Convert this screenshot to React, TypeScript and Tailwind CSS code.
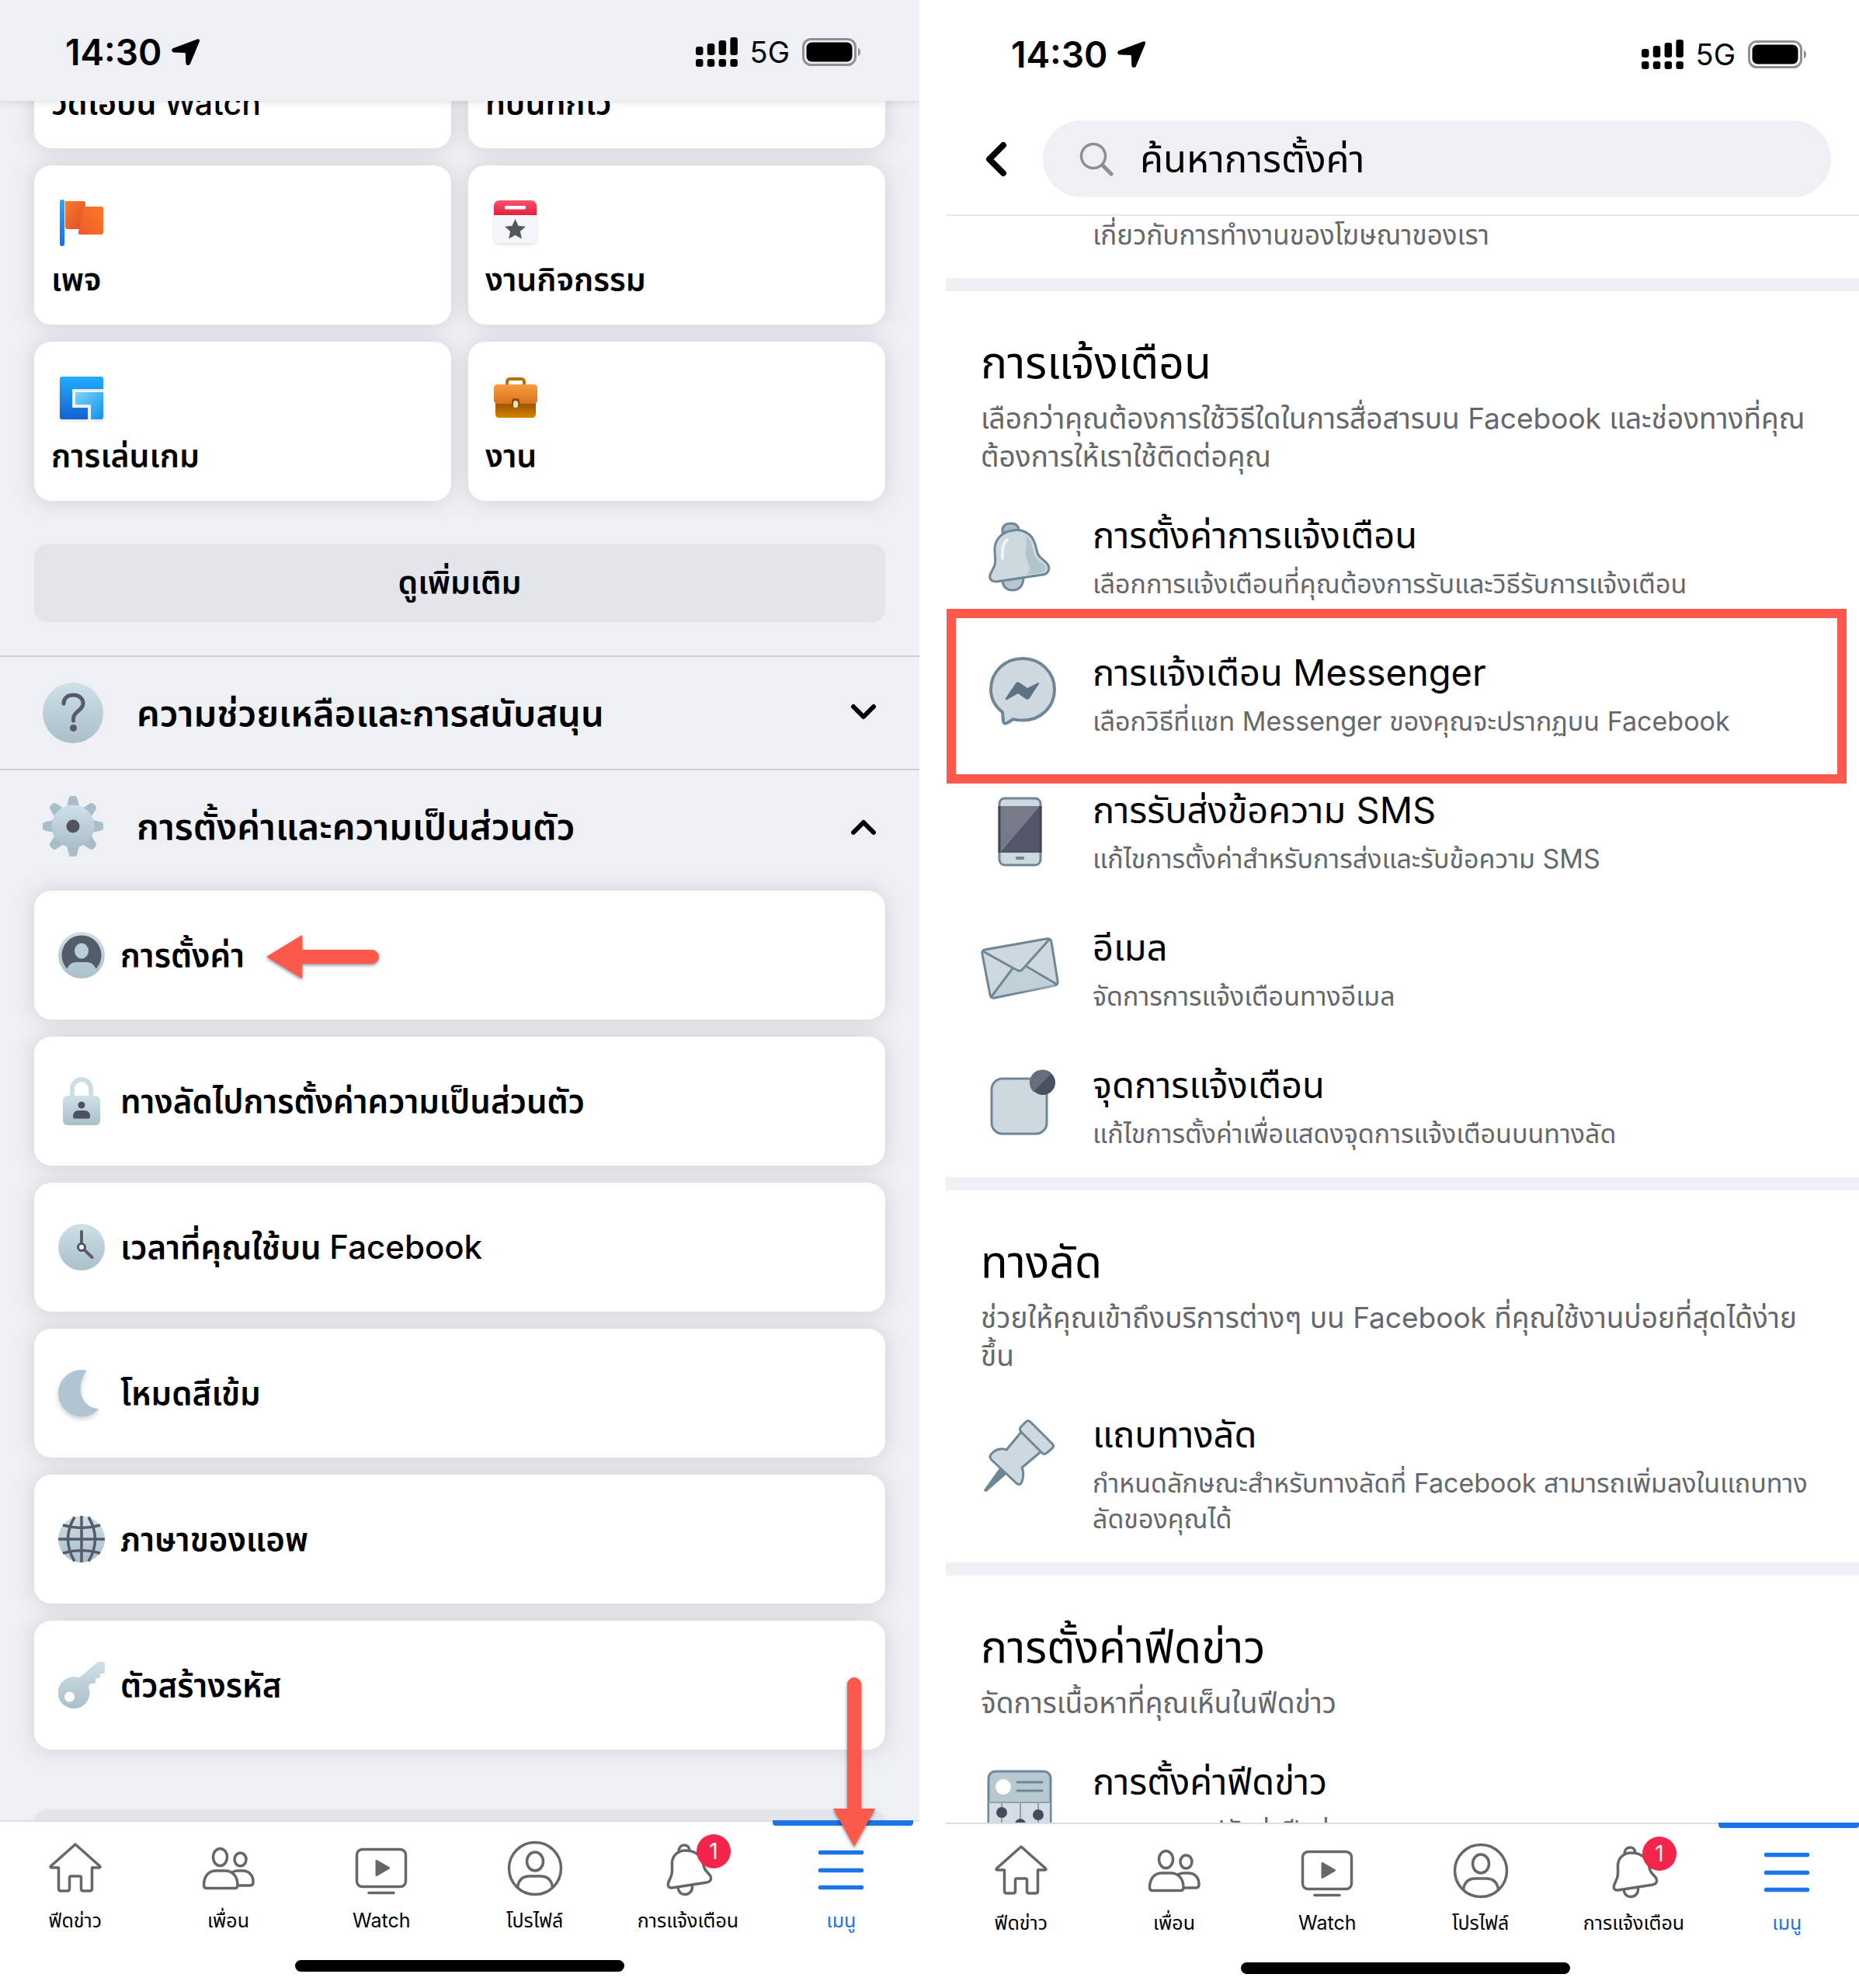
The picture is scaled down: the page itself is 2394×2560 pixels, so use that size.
import type { ReactNode } from "react";

type IconProps = { className?: string };

const BlueGradient = ({ id }: { id: string }) => (
  <defs>
    <linearGradient id={id} x1="0" y1="0" x2="0" y2="1">
      <stop offset="0" stopColor="#cfe0e8" />
      <stop offset="1" stopColor="#a9bfca" />
    </linearGradient>
  </defs>
);

/* ---------- status bar ---------- */

const StatusBar = () => (
  <div className="flex items-center justify-between pl-[84px] pr-[75px] h-[42px]">
    <div className="flex items-center gap-3">
      <span className="text-[46px] leading-[42px] font-semibold">14:30</span>
      <svg viewBox="0 0 38 36" className="w-[38px] h-9">
        <path d="M34 1.500c1.800-.8 3.700.8 3 2.700L25 33c-1.400 3.200-5.600 2.500-5.700-.9L18.800 20.200c0-.8-.4-1.200-1.200-1.200L4.300 18.500c-3.500-.2-4.300-4-1-5.500z" />
      </svg>
    </div>
    <div className="flex items-center gap-4">
      <svg viewBox="0 0 54 38" className="w-[54px] h-[38px]">
        {[12, 8, 4, 0].map((top, i) => (
          <g key={top}>
            <rect x={i * 14.8} y={top} width="9.500" height={23 - top} rx="3" />
            <rect x={i * 14.8} y="28" width="9.500" height="10" rx="3" />
          </g>
        ))}
      </svg>
      <span className="text-[38px] leading-[42px]">5G</span>
      <svg viewBox="0 0 76 36" className="w-[76px] h-9">
        <rect x="1.500" y="1.500" width="67" height="33" rx="10" fill="none" stroke="#8f9093" strokeWidth="3" />
        <rect x="5.500" y="5.500" width="59" height="25" rx="7" />
        <path d="M72 12.500c4 2 4 9 0 11z" fill="#8f9093" />
      </svg>
    </div>
  </div>
);

/* ---------- shortcut icons ---------- */

const FlagIcon = () => (
  <svg viewBox="0 0 60 62" className="w-[60px] h-[62px]">
    <defs>
      <linearGradient id="pole" x1="0" y1="0" x2="0" y2="1">
        <stop offset="0" stopColor="#2aa7f7" />
        <stop offset="1" stopColor="#1c6cf0" />
      </linearGradient>
      <linearGradient id="cloth1" x1="0" y1="0" x2="1" y2="1">
        <stop offset="0" stopColor="#fb7c2c" />
        <stop offset="1" stopColor="#dc4a2c" />
      </linearGradient>
      <linearGradient id="cloth2" x1="1" y1="0" x2="0" y2="1">
        <stop offset="0" stopColor="#fb7a28" />
        <stop offset="1" stopColor="#ef5a28" />
      </linearGradient>
    </defs>
    <rect x="2" y="1" width="6" height="60" rx="3" fill="url(#pole)" />
    <path d="M9 3h23q3 0 3 3v33H12q-3 0-3-3z" fill="url(#cloth1)" />
    <path d="M34 10h22q2 0 2 3v30q0 3-3 3H28q-3 0-2-3l6-31q.5-2 2-2z" fill="url(#cloth2)" />
  </svg>
);

const EventIcon = () => (
  <svg viewBox="0 0 60 62" className="w-[60px] h-[62px] drop-shadow-[0_2px_2px_rgba(0,0,0,0.12)]">
    <defs>
      <linearGradient id="cal" x1="0" y1="0" x2="0" y2="1">
        <stop offset="0" stopColor="#f8526c" />
        <stop offset="1" stopColor="#e3203f" />
      </linearGradient>
    </defs>
    <path d="M2 20h55v29q0 8-8 8H10q-8 0-8-8z" fill="#f4f6fa" />
    <path d="M2 21V10q0-8 8-8h39q8 0 8 8v11z" fill="url(#cal)" />
    <rect x="16" y="9" width="27" height="4.500" rx="1.500" fill="#fff" />
    <path
      d="M29.500 26l4 8.800 9.400 1-7 6.300 2 9.300-8.400-4.700-8.400 4.700 2-9.300-7-6.300 9.400-1z"
      fill="#54575c"
    />
  </svg>
);

const GamingIcon = () => (
  <svg viewBox="0 0 60 62" className="w-[60px] h-[62px] drop-shadow-[0_2px_2px_rgba(0,0,0,0.12)]">
    <defs>
      <linearGradient id="game1" x1="0" y1="0" x2="0" y2="1">
        <stop offset="0" stopColor="#20adfb" />
        <stop offset="1" stopColor="#1560d0" />
      </linearGradient>
      <linearGradient id="game2" x1="0" y1="0" x2="1" y2="1">
        <stop offset="0" stopColor="#7fd3fb" />
        <stop offset="1" stopColor="#0d92ea" />
      </linearGradient>
    </defs>
    <path d="M5 2h50q3 0 3 3v13H18v24h20v15H5q-3 0-3-3V5q0-3 3-3z" fill="url(#game1)" />
    <path d="M22 22h36v32q0 3-3 3H42V38H22z" fill="url(#game2)" />
  </svg>
);

const JobsIcon = () => (
  <svg viewBox="0 0 60 62" className="w-[60px] h-[62px]">
    <defs>
      <linearGradient id="bag1" x1="0" y1="0" x2="0" y2="1">
        <stop offset="0" stopColor="#f99c3c" />
        <stop offset="1" stopColor="#d9741c" />
      </linearGradient>
      <linearGradient id="bag2" x1="0" y1="0" x2="0" y2="1">
        <stop offset="0" stopColor="#8f4a04" />
        <stop offset="1" stopColor="#d88400" />
      </linearGradient>
    </defs>
    <path d="M19 14V9q0-4 4-4h14q4 0 4 4v5" fill="none" stroke="#b8700f" strokeWidth="4" />
    <path d="M4 34h52v16q0 5-5 5H9q-5 0-5-5z" fill="url(#bag2)" />
    <path d="M2 17q0-5 5-5h46q5 0 5 5v15q0 5-5 5H7q-5 0-5-5z" fill="url(#bag1)" />
    <rect x="25" y="30" width="10" height="9" rx="3" fill="#8f4a04" />
    <rect x="27" y="33" width="6" height="9" rx="3" fill="#f6e3cc" />
  </svg>
);

/* ---------- section and list icons ---------- */

const HelpIcon = () => (
  <svg viewBox="0 0 78 78" className="size-[78px]">
    <BlueGradient id="help" />
    <circle cx="39" cy="39" r="39" fill="url(#help)" />
    <path
      d="M27 27c0-7 5-11 12.500-11S52 20.500 52 27c0 9-12.500 10-12.500 19v3"
      fill="none"
      stroke="#565b68"
      strokeWidth="5"
      strokeLinecap="round"
    />
    <circle cx="39.500" cy="58.500" r="4.500" fill="#565b68" />
  </svg>
);

const GearIcon = () => (
  <svg viewBox="0 0 78 78" className="size-[78px]">
    <BlueGradient id="gear" />
    {[0, 45, 90, 135, 180, 225, 270, 315].map((deg) => (
      <path
        key={deg}
        d="M31 14l2.500-11q.8-3 3.500-3h4q2.700 0 3.500 3L47 14z"
        fill="#a9bdc8"
        transform={`rotate(${deg} 39 39)`}
      />
    ))}
    <circle cx="39" cy="39" r="27.500" fill="url(#gear)" />
    <circle cx="39" cy="39" r="8.500" fill="#4f545f" />
  </svg>
);

const AvatarIcon = () => (
  <svg viewBox="0 0 60 60" className="size-[60px]">
    <BlueGradient id="avatar" />
    <circle cx="30" cy="30" r="30" fill="url(#avatar)" />
    <path d="M11.500 47.500A25.500 25.500 0 1 1 48.500 47.500C46 41 41 39 36 39H24C19 39 14 41 11.500 47.500z" fill="#565b69" />
    <ellipse cx="30" cy="24.500" rx="9" ry="10" fill="#b9cfda" />
  </svg>
);

const LockIcon = () => (
  <svg viewBox="0 0 60 62" className="w-[60px] h-[62px]">
    <BlueGradient id="lock" />
    <path d="M18 26V15a12 12 0 0 1 24 0v11" fill="none" stroke="#cddde5" strokeWidth="6" />
    <rect x="6" y="24" width="48" height="38" rx="6" fill="url(#lock)" />
    <circle cx="30" cy="36" r="4.500" fill="#4d525e" />
    <path d="M19 51q0-8 7-8h8q7 0 7 8 0 2.500-2.500 2.500h-17Q19 53.500 19 51z" fill="#4d525e" />
  </svg>
);

const ClockIcon = () => (
  <svg viewBox="0 0 60 60" className="size-[60px]">
    <BlueGradient id="clock" />
    <circle cx="30" cy="30" r="30" fill="url(#clock)" />
    <path d="M30 30V10M30 30l13.500 13" stroke="#5a5f6a" strokeWidth="4" strokeLinecap="round" />
    <circle cx="30" cy="30" r="4.500" fill="#fff" stroke="#4f545f" strokeWidth="3" />
  </svg>
);

const MoonIcon = () => (
  <svg viewBox="0 0 60 60" className="size-[60px] drop-shadow-[0_3px_3px_rgba(0,0,0,0.2)]">
    <path d="M36.500.8A30 30 0 1 0 52.500 50C33 50 19 26 36.500.8z" fill="#b0c4d1" />
  </svg>
);

const GlobeIcon = () => (
  <svg viewBox="0 0 60 60" className="size-[60px]">
    <BlueGradient id="globe" />
    <circle cx="30" cy="30" r="30" fill="url(#globe)" />
    <g fill="none" stroke="#555c68" strokeWidth="3.500">
      <path d="M30 0v60M0 30h60M6 12q24 7 48 0M6 48q24-7 48 0" />
      <path d="M21 1.500Q4 30 21 58.500M39 1.500Q56 30 39 58.500" />
    </g>
  </svg>
);

const KeyIcon = () => (
  <svg viewBox="0 0 60 60" className="size-[60px]">
    <BlueGradient id="key" />
    <path
      fillRule="evenodd"
      d="M51 0h7q2 0 2 2v11q0 2-2 2h-4v4q0 2-2 2h-4v5q0 2-2 2h-5l-2 4A20.500 20.500 0 1 1 27 20.500zM14.500 38.500a6.500 6.500 0 1 0 .1 0z"
      fill="url(#key)"
    />
  </svg>
);

const Chevron = ({ className }: IconProps) => (
  <svg viewBox="0 0 36 24" className={`w-9 h-6 ${className ?? ""}`}>
    <path d="M5 4l13 13L31 4" fill="none" stroke="#000" strokeWidth="6" strokeLinecap="round" strokeLinejoin="round" />
  </svg>
);

/* ---------- settings icons ---------- */

const line = { fill: "#cdd9df", stroke: "#6e8797", strokeWidth: 3, strokeLinejoin: "round" } as const;

const BellIcon = () => (
  <svg viewBox="0 0 98 98" className="size-[98px]">
    <path {...line} d="M27 19C26 10 31 7 38 7s10 4 10 9z" fill="#a9bcc6" />
    <path {...line} d="M27 80c0 9 6 13 13 13s14-4 14-17z" fill="#b7c7d0" />
    <path
      {...line}
      d="M41 16C24 18 16 30 17 43c.5 8 2 14-1 20L11 73c-1.500 6 2 9 8 9l60-9c7-1 9-7 7-12-2-4-7-7-11-11-5-5-3-10-7-19C64 20 53 14 41 16z"
    />
    <path d="M57 22c10 8 8 20 12 28 4 7 15 9 14 15-1 5-4 5-8 6l-18 2c9-6 4-14 1-20-4-9 2-19-1-31z" fill="#b3c4cf" />
    <path d="M27 52V40q1-8 6-12" fill="none" stroke="#edf3f6" strokeWidth="4" strokeLinecap="round" />
  </svg>
);

const MessengerIcon = () => (
  <svg viewBox="0 0 98 98" className="size-[98px]">
    <path
      {...line}
      strokeWidth="4"
      d="M53 4C30 4 12 21 12 44c0 13 6 22 15 29l1 12c.5 3 3 3 5 2l8-5c4 1.500 8 1.500 12 1.500 23 0 41-17 41-39.500S76 4 53 4z"
    />
    <path d="M31 55L44 36q2-3 5-1l10 7 14-7q2-.5 1 1.500L62 55q-2 3-5 1l-10-7-14 8q-3 1-2-2z" fill="#5c7383" />
  </svg>
);

const PhoneIcon = () => (
  <svg viewBox="0 0 98 98" className="size-[98px]">
    <rect {...line} x="23" y="7" width="53" height="86" rx="7" />
    <path d="M24 17h51v60H24z" fill="#525668" />
    <path d="M24 17h51L24 77z" fill="#777b89" />
    <path d="M23 17v60M76 17v60" stroke="#3f4557" strokeWidth="3" />
    <rect x="44" y="82" width="11" height="4" rx="1" fill="#6e8797" />
  </svg>
);

const EmailIcon = () => (
  <svg viewBox="0 0 98 98" className="size-[98px] overflow-visible">
    <path {...line} d="M4 25L83 11q6-1 7 4l8 50q1 5-4 6L17 87q-5 1-6-4L1 31q-1-5 3-6z" />
    <path d="M14 85l26-33q12 6 17-3l38 22-1 1z" fill="#b9c8d1" opacity=".6" />
    <path d="M2 27l43 24q5 3 8-1L87 12M13 85l27-36M96 69L57 46" fill="none" stroke="#6e8797" strokeWidth="3" />
  </svg>
);

const DotIcon = () => (
  <svg viewBox="0 0 98 98" className="size-[98px]">
    <rect {...line} x="13" y="14" width="71" height="71" rx="14" />
    <circle cx="79" cy="19" r="16" fill="#4a4f62" />
    <path d="M67 31a16 16 0 0 1 23-24z" fill="#696e7e" />
  </svg>
);

const PinIcon = () => (
  <svg viewBox="0 0 98 98" className="size-[98px]">
    <path d="M4 94L24 66l7 7L6 95z" fill="#6e8797" stroke="#6e8797" strokeWidth="2" strokeLinejoin="round" />
    <path {...line} d="M52 18L32 42c-6-3-14-1-20 6-2 3-1 5 1 7l32 30c3 3 6 1 7-2 2-6 3-12 0-18l26-22z" />
    <path {...line} d="M51 19q-3-4 0-7l6-6q3-3 6 0l28 28q3 3 0 6l-7 6q-3 3-6 0z" />
  </svg>
);

const FeedIcon = () => (
  <svg viewBox="0 0 98 98" className="size-[98px]">
    <rect {...line} x="9" y="9" width="80" height="88" rx="9" fill="#b8c8d1" />
    <path d="M10 50h78v47H10z" fill="#d3dde3" />
    <path d="M9 49h80M26 50v47M50 50v47M73 50v47" stroke="#8da1ae" strokeWidth="2" />
    <circle cx="28" cy="29" r="10" fill="#fff" />
    <path d="M46 23h32M46 34h32" stroke="#6e8797" strokeWidth="3" strokeLinecap="round" />
    <g fill="#454b5e">
      <circle cx="26" cy="62" r="7" />
      <circle cx="50" cy="77" r="7" />
      <circle cx="73" cy="65" r="7" />
    </g>
  </svg>
);

/* ---------- tab bar ---------- */

const Tab = ({ children }: { children: ReactNode }) => (
  <svg
    viewBox="0 0 72 72"
    className="size-[72px]"
    fill="none"
    stroke="#65676b"
    strokeWidth="3.500"
    strokeLinecap="round"
    strokeLinejoin="round"
  >
    {children}
  </svg>
);

const tabs: { label: string; icon: ReactNode; badge?: number; active?: boolean }[] = [
  {
    label: "ฟีดข่าว",
    icon: (
      <Tab>
        <path d="M36 5L4.500 33q-1.500 2 1 2H14.500V62q0 3 3 3h8q3 0 3-3V48q0-2 2-2h11q2 0 2 2v14q0 3 3 3h8q3 0 3-3V35h9q2.500 0 1-2z" />
      </Tab>
    ),
  },
  {
    label: "เพื่อน",
    icon: (
      <Tab>
        <ellipse cx="25.500" cy="21.500" rx="9" ry="11" />
        <ellipse cx="51.500" cy="24.500" rx="7.500" ry="8.500" />
        <path d="M8 61.500Q4.500 61.500 4.500 57.500C4.500 46 11 39 20 39h12c9 0 16 7 16 18.500q0 4-3.500 4z" />
        <path d="M42 40.500q3-1.500 6-1.500h6c8 0 14 5 14 14.500q0 4.500-4 4.500H48.500" />
      </Tab>
    ),
  },
  {
    label: "Watch",
    icon: (
      <Tab>
        <rect x="4.500" y="11.500" width="63" height="48" rx="7" />
        <path d="M20 67.500h32" />
        <path d="M30 26.500v18L45.500 35.500z" fill="#65676b" strokeWidth="3" />
      </Tab>
    ),
  },
  {
    label: "โปรไฟล์",
    icon: (
      <Tab>
        <circle cx="36" cy="36" r="33.500" />
        <ellipse cx="36" cy="27" rx="10.500" ry="12" />
        <path d="M13.500 60C15 50 21 46 29 46h14c8 0 14 4 15.500 14" />
      </Tab>
    ),
  },
  {
    label: "การแจ้งเตือน",
    badge: 1,
    icon: (
      <Tab>
        <path d="M24 15c0-6 3-9 7-9s6.500 2.500 7 7" />
        <path d="M31 13C20 14 14.500 22 15.500 33c.5 9-.5 12-3 17l-2 5c-1 4 1 6.500 5 6l45-7c4.500-1 6-4 4.500-8-2-4-7-6-8.500-12-2-10-7-22-25.500-21z" />
        <path d="M23 61c1 5 4 8.500 9 8.500s10-3.500 9.500-11" />
      </Tab>
    ),
  },
  {
    label: "เมนู",
    active: true,
    icon: (
      <Tab>
        <path d="M9.500 15.500h53M9.500 38.500h53M9.500 60.500h53" stroke="#1b74e8" strokeWidth="5.500" />
      </Tab>
    ),
  },
];

const TabBar = () => (
  <nav className="relative z-10 border-t-2 border-[#dddee2] bg-white">
    <ul className="-ml-0.5 grid grid-cols-6 pr-0.5">
      {tabs.map((tab) => (
        <li key={tab.label} className="relative">
          {tab.active && <span className="absolute -top-0.5 right-1.5 left-2.5 h-[7px] rounded-b bg-[#1b74e8]" />}
          <button type="button" className="flex w-full flex-col items-center gap-2.5 pt-6">
            <span className="relative">
              {tab.icon}
              {tab.badge && (
                <span className="absolute -top-2 -right-[19px] size-11 rounded-full bg-[#f3254b] text-center text-[28px] leading-[44px] text-white">
                  {tab.badge}
                </span>
              )}
            </span>
            <span className={`text-[25px] leading-[42px] whitespace-nowrap ${tab.active ? "text-[#1b74e8]" : ""}`}>
              {tab.label}
            </span>
          </button>
        </li>
      ))}
    </ul>
    <div className="mx-auto mt-[30px] mb-[18px] h-[15px] w-[424px] rounded-full bg-black" />
  </nav>
);

/* ---------- menu screen ---------- */

const shortcuts: { label: ReactNode; icon?: ReactNode }[] = [
  {
    label: (
      <>
        วิดีโอบน <span className="font-medium">Watch</span>
      </>
    ),
  },
  { label: "ที่บันทึกไว้" },
  { label: "เพจ", icon: <FlagIcon /> },
  { label: "งานกิจกรรม", icon: <EventIcon /> },
  { label: "การเล่นเกม", icon: <GamingIcon /> },
  { label: "งาน", icon: <JobsIcon /> },
];

const settingsLinks: { label: ReactNode; icon: ReactNode; marked?: boolean }[] = [
  { label: "การตั้งค่า", icon: <AvatarIcon />, marked: true },
  { label: "ทางลัดไปการตั้งค่าความเป็นส่วนตัว", icon: <LockIcon /> },
  {
    label: (
      <>
        เวลาที่คุณใช้บน <span className="font-medium">Facebook</span>
      </>
    ),
    icon: <ClockIcon />,
  },
  { label: "โหมดสีเข้ม", icon: <MoonIcon /> },
  { label: "ภาษาของแอพ", icon: <GlobeIcon /> },
  { label: "ตัวสร้างรหัส", icon: <KeyIcon /> },
];

const MenuScreen = () => (
  <section className="relative flex h-screen min-w-0 flex-col overflow-hidden bg-[#eff0f4]">
    <header className="relative z-10 bg-[#eff0f4] pt-[46px] pb-[42px] shadow-[0_1px_10px_rgba(0,0,0,0.12)]">
      <StatusBar />
    </header>

    <main className="min-h-0 flex-1 overflow-hidden">
      <div className="-mt-36">
        <div className="grid grid-cols-2 gap-[22px] px-11">
          {shortcuts.map((item, i) => (
            <a
              key={i}
              href="#"
              className="flex h-[205px] flex-col justify-end rounded-[22px] bg-white pb-[30px] pl-[22px] shadow-[0_0_28px_rgba(0,0,0,0.13)]"
            >
              <span className="pl-[9px]">{item.icon}</span>
              <span className="mt-3.5 text-[41px] leading-[56px] font-semibold">{item.label}</span>
            </a>
          ))}
        </div>

        <div className="px-11 pt-14 pb-[43px]">
          <button type="button" className="h-[100px] w-full rounded-2xl bg-[#e4e5ea] text-[41px] font-semibold">
            ดูเพิ่มเติม
          </button>
        </div>

        <button
          type="button"
          className="flex h-[146px] w-full items-center border-t-2 border-[#cbccd1] pr-[54px] pl-[55px] text-left"
        >
          <HelpIcon />
          <span className="flex-1 pl-[43px] text-[47px] leading-[60px] font-semibold">ความช่วยเหลือและการสนับสนุน</span>
          <Chevron />
        </button>
        <button
          type="button"
          className="flex h-[146px] w-full items-center border-t-2 border-[#cbccd1] pr-[54px] pl-[55px] text-left"
        >
          <GearIcon />
          <span className="flex-1 pl-[43px] text-[47px] leading-[60px] font-semibold">การตั้งค่าและความเป็นส่วนตัว</span>
          <Chevron className="rotate-180" />
        </button>

        <ul className="flex flex-col gap-[22px] px-11 pt-[11px]">
          {settingsLinks.map((item, i) => (
            <li key={i} className="relative">
              <a
                href="#"
                className="flex h-[166px] items-center gap-5 rounded-[22px] bg-white pl-[31px] text-[42px] leading-[56px] font-semibold shadow-[0_0_28px_rgba(0,0,0,0.13)]"
              >
                {item.icon}
                <span>{item.label}</span>
              </a>
              {item.marked && (
                <svg
                  viewBox="0 0 146 58"
                  className="absolute top-[57px] left-[299px] w-[146px] drop-shadow-[0_2px_2px_rgba(0,0,0,0.45)]"
                >
                  <path d="M0 28L46 0v19h90a9 9 0 0 1 0 18H46v19z" fill="#fb594c" />
                </svg>
              )}
            </li>
          ))}
        </ul>

        <div className="mx-11 mt-[77px] h-[100px] rounded-2xl bg-[#e4e5ea]" />
      </div>
    </main>

    <div className="bg-white pb-[3px]">
      <TabBar />
    </div>

    <svg
      viewBox="0 0 54 218"
      className="absolute right-[57px] bottom-[182px] z-20 w-[54px] drop-shadow-[0_2px_2px_rgba(0,0,0,0.45)]"
    >
      <path d="M27 218L0 169h18V9a9 9 0 0 1 18 0v160h18z" fill="#fb594c" />
    </svg>
  </section>
);

/* ---------- settings screen ---------- */

type Row = { title: string; text: ReactNode; icon: ReactNode; highlighted?: boolean };

const sections: { title: string; text: ReactNode; rows: Row[] }[] = [
  {
    title: "การแจ้งเตือน",
    text: (
      <>
        เลือกว่าคุณต้องการใช้วิธีใดในการสื่อสารบน Facebook และช่องทางที่คุณ
        <br />
        ต้องการให้เราใช้ติดต่อคุณ
      </>
    ),
    rows: [
      {
        title: "การตั้งค่าการแจ้งเตือน",
        text: "เลือกการแจ้งเตือนที่คุณต้องการรับและวิธีรับการแจ้งเตือน",
        icon: <BellIcon />,
      },
      {
        title: "การแจ้งเตือน Messenger",
        text: "เลือกวิธีที่แชท Messenger ของคุณจะปรากฏบน Facebook",
        icon: <MessengerIcon />,
        highlighted: true,
      },
      {
        title: "การรับส่งข้อความ SMS",
        text: "แก้ไขการตั้งค่าสำหรับการส่งและรับข้อความ SMS",
        icon: <PhoneIcon />,
      },
      { title: "อีเมล", text: "จัดการการแจ้งเตือนทางอีเมล", icon: <EmailIcon /> },
      {
        title: "จุดการแจ้งเตือน",
        text: "แก้ไขการตั้งค่าเพื่อแสดงจุดการแจ้งเตือนบนทางลัด",
        icon: <DotIcon />,
      },
    ],
  },
  {
    title: "ทางลัด",
    text: (
      <>
        ช่วยให้คุณเข้าถึงบริการต่างๆ บน Facebook ที่คุณใช้งานบ่อยที่สุดได้ง่าย
        <br />
        ขึ้น
      </>
    ),
    rows: [
      {
        title: "แถบทางลัด",
        text: (
          <>
            กำหนดลักษณะสำหรับทางลัดที่ Facebook สามารถเพิ่มลงในแถบทาง
            <br />
            ลัดของคุณได้
          </>
        ),
        icon: <PinIcon />,
      },
    ],
  },
  {
    title: "การตั้งค่าฟีดข่าว",
    text: "จัดการเนื้อหาที่คุณเห็นในฟีดข่าว",
    rows: [{ title: "การตั้งค่าฟีดข่าว", text: "ควบคุมและปรับค่าฟีดข่าวของคุณ", icon: <FeedIcon /> }],
  },
];

const SettingsRow = ({ row }: { row: Row }) => (
  <li className="relative">
    <a href="#" className="flex gap-[45px] pb-[61px] pl-[46px]">
      <span className="pt-2">{row.icon}</span>
      <span className="flex-1 whitespace-nowrap">
        <span className="block text-[47px] leading-[60px]">{row.title}</span>
        <span className="mt-2.5 block text-[34px] leading-[46px] text-[#65676b]">{row.text}</span>
      </span>
    </a>
    {row.highlighted && <span className="absolute -top-[52px] right-4 left-px h-[225px] border-12 border-[#fb594c]" />}
  </li>
);

const SettingsScreen = () => (
  <section className="flex h-screen min-w-0 flex-col overflow-hidden bg-white">
    <header className="-mr-2 pt-[49px]">
      <StatusBar />
      <div className="mt-16 flex items-center pr-11 pb-[22px] pl-[47px]">
        <button type="button" aria-label="กลับ">
          <svg viewBox="0 0 36 48" className="w-9 h-12">
            <path d="M27 6L9 24l18 18" fill="none" stroke="#000" strokeWidth="8" strokeLinecap="round" strokeLinejoin="round" />
          </svg>
        </button>
        <label className="ml-[42px] flex h-[99px] flex-1 items-center gap-[34px] rounded-full bg-[#eff0f4] pl-[47px]">
          <svg viewBox="0 0 44 44" className="size-11" fill="none" stroke="#8d8f94" strokeLinecap="round">
            <circle cx="18" cy="18" r="15.500" strokeWidth="3.500" />
            <path d="M30 30l11 11" strokeWidth="5" />
          </svg>
          <input
            type="search"
            aria-label="ค้นหาการตั้งค่า"
            placeholder="ค้นหาการตั้งค่า"
            className="h-20 flex-1 bg-transparent text-[49px] outline-none placeholder:text-black"
          />
        </label>
      </div>
    </header>

    <main className="min-h-0 flex-1 overflow-hidden border-t-2 border-[#e9eaec]">
      <p className="-mt-[46px] pb-8 pl-[189px] text-[35px] leading-[47px] text-[#65676b]">
        กำหนดการตั้งค่าโฆษณาของคุณ ตลอดจนเรียนรู้ข้อมูล
        <br />
        เกี่ยวกับการทำงานของโฆษณาของเรา
      </p>
      {sections.map((section) => (
        <section key={section.title} className="-mb-7 border-t-[17px] border-[#eff0f4] bg-white pt-[49px]">
          <h2 className="mb-1 pl-[45px] text-[57px] leading-[86px]">{section.title}</h2>
          <p className="pl-[45px] text-[37px] leading-[49px] whitespace-nowrap text-[#65676b]">{section.text}</p>
          <ul className="pt-[47px]">
            {section.rows.map((row) => (
              <SettingsRow key={row.title} row={row} />
            ))}
          </ul>
        </section>
      ))}
    </main>

    <div className="-mr-2">
      <TabBar />
    </div>
  </section>
);

export default function App() {
  return (
    <div className="grid grid-cols-[1184fr_1176fr] gap-[34px] overflow-hidden bg-white font-['Inter','Noto_Sans_Thai','Noto_Sans',sans-serif] text-black">
      <MenuScreen />
      <SettingsScreen />
    </div>
  );
}
